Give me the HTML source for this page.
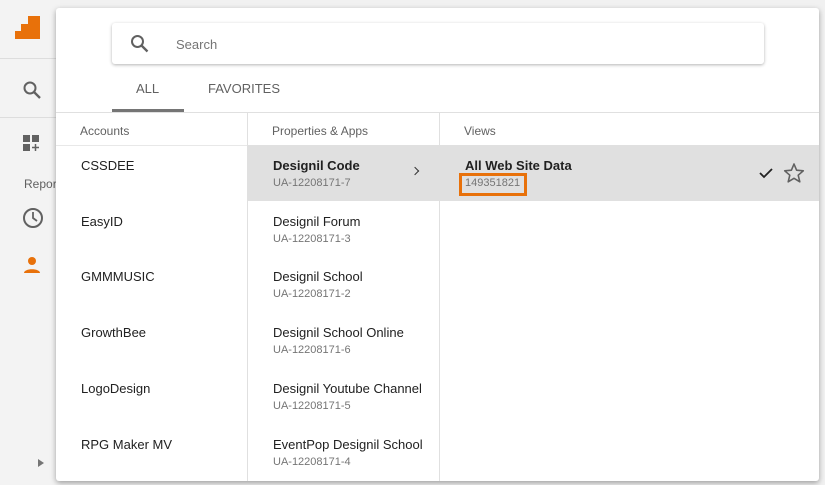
<!DOCTYPE html>
<html><head><style>
*{margin:0;padding:0;box-sizing:border-box}
body{width:825px;height:485px;overflow:hidden;background:#f1f1f1;font-family:"Liberation Sans",Arial,sans-serif;position:relative}
.side{position:absolute;left:0;top:0;width:60px;height:485px;background:#f3f3f3}
.modal{position:absolute;left:56px;top:8px;width:763px;height:473px;background:#fff;border-radius:3px;box-shadow:0 2px 6px rgba(0,0,0,.35);overflow:hidden}
.search{position:absolute;left:56px;top:15px;width:652px;height:41px;border-radius:3px;box-shadow:0 1px 3px rgba(0,0,0,.3);background:#fff}
.search span{position:absolute;left:64px;top:14px;font-size:13px;color:#757575}
.tab{position:absolute;top:73px;font-size:13px;color:#616161}
.ul{position:absolute;left:56px;top:101px;width:72px;height:3px;background:#757575}
.hline{position:absolute;left:0;top:104px;width:763px;height:1px;background:#e0e0e0}
.h2{position:absolute;left:0;top:137px;width:763px;height:1px;background:#e8e8e8}
.col{position:absolute;top:104px;bottom:0;border-right:1px solid #e0e0e0}
.hd{position:absolute;top:116px;font-size:12px;color:#616161}
.it{position:absolute;font-size:13px;color:#212121}
.sub{position:absolute;font-size:11px;color:#757575}
</style></head><body>
<div class="side">
 <svg style="position:absolute;left:15px;top:16px" width="26" height="24"><path d="M13 0h12v23H0v-8h6v-7h7z" fill="#e8710a"/></svg>
 <div style="position:absolute;left:0;top:58px;width:60px;height:1px;background:#ddd"></div>
 <svg style="position:absolute;left:22px;top:80px" width="20" height="20"><circle cx="8" cy="8" r="5.5" fill="none" stroke="#616161" stroke-width="2"/><path d="M12 12l6 6" stroke="#616161" stroke-width="2.3"/></svg>
 <div style="position:absolute;left:0;top:117px;width:60px;height:1px;background:#ddd"></div>
 <svg style="position:absolute;left:23px;top:135px" width="18" height="18"><rect x="0" y="0" width="7" height="7" fill="#616161"/><rect x="9" y="0" width="7" height="7" fill="#616161"/><rect x="0" y="9" width="7" height="7" fill="#616161"/><path d="M12.5 9v7M9 12.5h7" stroke="#616161" stroke-width="1.5"/></svg>
 <div style="position:absolute;left:24px;top:177px;font-size:12px;color:#616161">Repor</div>
 <svg style="position:absolute;left:22px;top:207px" width="22" height="22"><circle cx="11" cy="11" r="9" fill="none" stroke="#616161" stroke-width="2"/><path d="M11 5v6l4 3" fill="none" stroke="#616161" stroke-width="1.8"/></svg>
 <svg style="position:absolute;left:23px;top:256px" width="18" height="18"><circle cx="9" cy="5" r="4" fill="#e8710a"/><path d="M1 17c0-5 16-5 16 0z" fill="#e8710a"/></svg>
 <div style="position:absolute;left:38px;top:459px;width:0;height:0;border-left:6px solid #757575;border-top:4px solid transparent;border-bottom:4px solid transparent"></div>
</div>
<div class="modal">
 <div class="search">
  <svg style="position:absolute;left:18px;top:11px" width="20" height="20"><circle cx="7.5" cy="7.5" r="5.5" fill="none" stroke="#616161" stroke-width="2"/><path d="M11.5 11.5l6 6" stroke="#616161" stroke-width="2.3"/></svg>
  <span>Search</span>
 </div>
 <div class="tab" style="left:80px">ALL</div>
 <div class="tab" style="left:152px">FAVORITES</div>
 <div class="ul"></div>
 <div class="hline"></div>
 <div class="h2"></div>
 <div class="col" style="left:0;width:192px"></div>
 <div class="col" style="left:192px;width:192px"></div>
 <div style="position:absolute;left:192px;top:137px;width:191px;height:56px;background:#e0e0e0"></div>
 <div style="position:absolute;left:384px;top:137px;width:379px;height:56px;background:#e0e0e0"></div>
 <div class="hd" style="left:24px">Accounts</div>
 <div class="hd" style="left:216px">Properties &amp; Apps</div>
 <div class="hd" style="left:408px">Views</div>

 <div class="it" style="left:25px;top:150px">CSSDEE</div>
 <div class="it" style="left:25px;top:206px">EasyID</div>
 <div class="it" style="left:25px;top:261px">GMMMUSIC</div>
 <div class="it" style="left:25px;top:317px">GrowthBee</div>
 <div class="it" style="left:25px;top:373px">LogoDesign</div>
 <div class="it" style="left:25px;top:429px">RPG Maker MV</div>

 <div class="it" style="left:217px;top:150px;font-weight:bold">Designil Code</div>
 <div class="sub" style="left:217px;top:169px">UA-12208171-7</div>
 <div style="position:absolute;left:356px;top:160px;width:6px;height:6px;border-top:1.5px solid #333;border-right:1.5px solid #333;transform:rotate(45deg)"></div>
 <div class="it" style="left:217px;top:206px">Designil Forum</div>
 <div class="sub" style="left:217px;top:225px">UA-12208171-3</div>
 <div class="it" style="left:217px;top:261px">Designil School</div>
 <div class="sub" style="left:217px;top:280px">UA-12208171-2</div>
 <div class="it" style="left:217px;top:317px">Designil School Online</div>
 <div class="sub" style="left:217px;top:336px">UA-12208171-6</div>
 <div class="it" style="left:217px;top:373px">Designil Youtube Channel</div>
 <div class="sub" style="left:217px;top:392px">UA-12208171-5</div>
 <div class="it" style="left:217px;top:429px">EventPop Designil School</div>
 <div class="sub" style="left:217px;top:448px">UA-12208171-4</div>

 <div class="it" style="left:409px;top:150px;font-weight:bold">All Web Site Data</div>
 <div style="position:absolute;left:403px;top:165px;width:68px;height:23px;border:3px solid #e8710a"></div>
 <div class="sub" style="left:409px;top:169px">149351821</div>
 <svg style="position:absolute;left:703px;top:159px" width="14" height="12"><path d="M1 6l4 4 8-8" fill="none" stroke="#222" stroke-width="1.8"/></svg>
 <svg style="position:absolute;left:727px;top:154px" width="22" height="22"><path d="M11 2l2.6 6.2 6.7.6-5.1 4.4 1.6 6.6L11 16.3l-5.8 3.5 1.6-6.6L1.7 8.8l6.7-.6z" fill="none" stroke="#616161" stroke-width="1.6" stroke-linejoin="round"/></svg>
</div>
</body></html>
